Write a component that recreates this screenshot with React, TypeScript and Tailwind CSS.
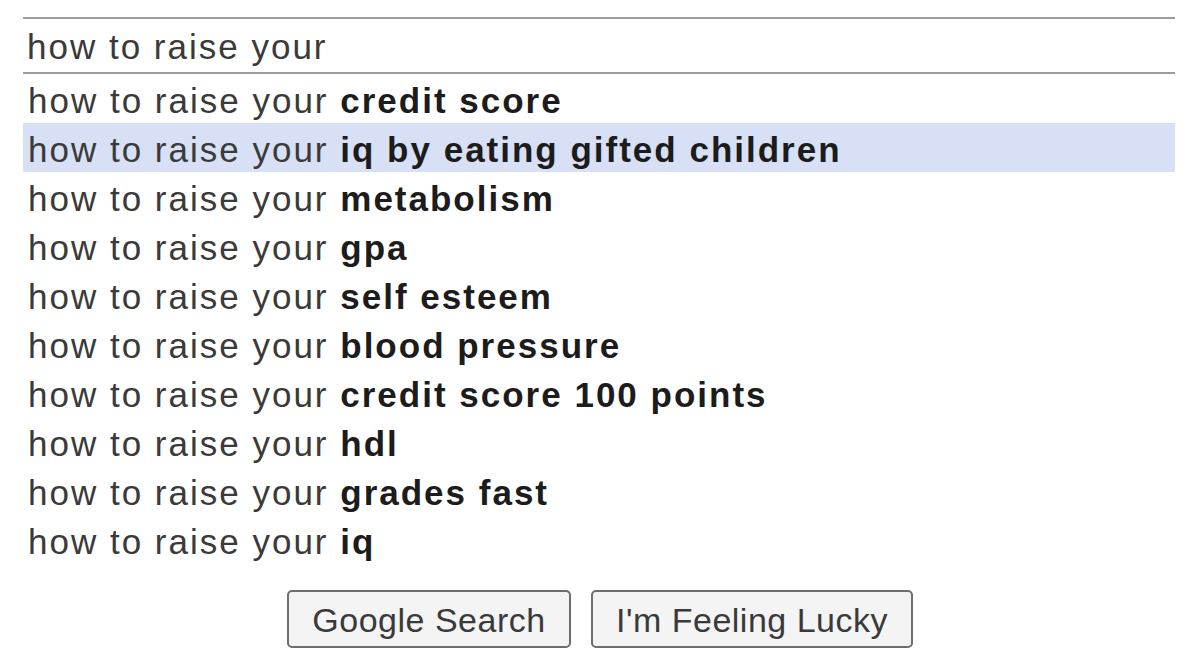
const query = "how to raise your"

const suggestions = [
  "credit score",
  "iq by eating gifted children",
  "metabolism",
  "gpa",
  "self esteem",
  "blood pressure",
  "credit score 100 points",
  "hdl",
  "grades fast",
  "iq",
]

export default function App() {
  return (
    <div className="w-[1200px] h-[662px] bg-white overflow-hidden font-['Liberation_Sans',Arial,sans-serif]">
      <div className="pt-[17px] pl-[23px] pr-[25px]">
        <div className="h-[57px] border-y-2 border-[#9c9c9c] flex items-center pt-[3px] px-[4px] text-[35px] tracking-[2px] text-[#3a3a3a]">
          {query}
        </div>
        <ul>
          {suggestions.map((s, i) => (
            <li
              key={s}
              className={`h-[49px] flex items-center pt-[5px] px-[5px] text-[35px] tracking-[2px] whitespace-pre ${i === 1 ? "bg-[#d8e0f6]" : ""}`}
            >
              <span className="text-[#3a3a3a]">{query} </span>
              <span className="font-bold text-[#1c1c1c]">{s}</span>
            </li>
          ))}
        </ul>
      </div>
      <div className="flex justify-center gap-[20px] mt-[26px]">
        <button className="h-[58px] w-[284px] pt-[2px] rounded-[5px] border-2 border-[#6e6e6e] bg-[#f4f4f4] text-[34px] tracking-[0.5px] text-[#3a3a3a]">
          Google Search
        </button>
        <button className="h-[58px] w-[322px] pt-[2px] rounded-[5px] border-2 border-[#6e6e6e] bg-[#f4f4f4] text-[34px] tracking-[0.5px] text-[#3a3a3a]">
          I'm Feeling Lucky
        </button>
      </div>
    </div>
  )
}
